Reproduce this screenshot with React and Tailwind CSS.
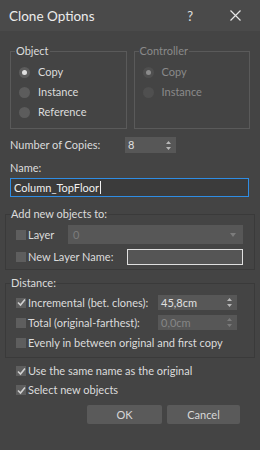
import React from 'react';

const Radio = ({ label, checked, disabled }) => (
  <div className="flex items-center h-[20px]">
    <span
      className={`w-[11px] h-[11px] rounded-full flex items-center justify-center ${
        disabled ? 'bg-[#4f4f4f]' : 'bg-[#5c5c5c]'
      }`}
    >
      {checked && (
        <span className={`w-[5px] h-[5px] rounded-full ${disabled ? 'bg-[#8c8c8c]' : 'bg-[#e0e0e0]'}`} />
      )}
    </span>
    <span className={`ml-[8px] ${disabled ? 'text-[#8a8a8a]' : 'text-[#dcdcdc]'}`}>{label}</span>
  </div>
);

const Check = ({ checked }) => (
  <span className="w-[10px] h-[10px] bg-[#5e5e5e] flex items-center justify-center shrink-0">
    {checked && (
      <svg width="9" height="9" viewBox="0 0 9 9">
        <path d="M1 4.5 L3.5 7 L8 1.5" fill="none" stroke="#d0d0d0" strokeWidth="1.6" />
      </svg>
    )}
  </span>
);

const Arrows = ({ dim }) => (
  <svg width="5" height="9" viewBox="0 0 5 9" className="shrink-0">
    <path d="M2.5 0 L5 3 L0 3 Z M0 6 L5 6 L2.5 9 Z" fill={dim ? '#7a7a7a' : '#b8b8b8'} />
  </svg>
);

const Spinner = ({ value, dim, className }) => (
  <div className={`flex items-center justify-between bg-[#575757] pl-[3px] pr-[5px] ${className}`}>
    <span className={dim ? 'text-[#868686]' : 'text-[#e0e0e0]'}>{value}</span>
    <Arrows dim={dim} />
  </div>
);

const CheckRow = ({ label, checked, className = '' }) => (
  <div className={`flex items-center whitespace-nowrap ${className}`}>
    <Check checked={checked} />
    <span className="ml-[2px] text-[#dcdcdc]">{label}</span>
  </div>
);

export default function App() {
  return (
    <div className="w-[260px] h-[450px] bg-[#444444] text-[11px] leading-[14px] text-[#dcdcdc] font-['Lato',sans-serif] overflow-hidden flex flex-col">
      {/* Title bar */}
      <div className="h-[31px] bg-[#4a4a4a] flex items-center pl-[9px] shrink-0">
        <span className="text-[13.5px] text-[#ececec]">Clone Options</span>
        <span className="ml-auto text-[13px] text-[#e0e0e0] mr-[37px]">?</span>
        <svg width="11" height="11" viewBox="0 0 11 11" className="mr-[19px]">
          <path d="M0.5 0.5 L10.5 10.5 M10.5 0.5 L0.5 10.5" stroke="#e6e6e6" strokeWidth="1.2" />
        </svg>
      </div>

      <div className="flex flex-col pt-[13px]">
        {/* Object / Controller */}
        <div className="flex gap-[7px] px-[10px]">
          <fieldset className="w-[117px] h-[85px] border border-[#5a5a5a] px-[8px]">
            <legend className="px-[1px] -ml-[4px]">Object</legend>
            <div className="pt-[4px]">
              <Radio label="Copy" checked />
              <Radio label="Instance" />
              <Radio label="Reference" />
            </div>
          </fieldset>
          <fieldset className="w-[117px] h-[85px] border border-[#5a5a5a] px-[8px]">
            <legend className="px-[1px] -ml-[4px] text-[#8a8a8a]">Controller</legend>
            <div className="pt-[4px]">
              <Radio label="Copy" checked disabled />
              <Radio label="Instance" disabled />
            </div>
          </fieldset>
        </div>

        {/* Number of copies */}
        <div className="flex items-center px-[10px] mt-[8px]">
          <span>Number of Copies:</span>
          <Spinner value="8" className="ml-auto mr-[74px] w-[51px] h-[16px]" />
        </div>

        <div className="px-[10px] mt-[8px]">Name:</div>
        <div className="mx-[10px] mt-[3px] w-[239px] h-[19px] border border-[#2f8de4] bg-[#3b3b3b] flex items-center pl-[3px]">
          <span className="text-[#f0f0f0]">Column_TopFloor</span>
          <span className="w-px h-[13px] bg-[#f0f0f0] ml-[1px]" />
        </div>

        {/* Add new objects to */}
        <fieldset className="mx-[5px] mt-[10px] w-[250px] h-[63px] border border-[#3a3a3a] px-[10px]">
          <legend className="-ml-[5px]">Add new objects to:</legend>
          <div className="flex items-center mt-[4px] h-[19px]">
            <CheckRow label="Layer" />
            <div className="ml-auto mr-[1px] w-[175px] h-[19px] bg-[#575757] flex items-center justify-between pl-[5px] pr-[7px]">
              <span className="text-[#7c7c7c]">0</span>
              <svg width="6" height="4" viewBox="0 0 6 4">
                <path d="M0 0 L6 0 L3 4 Z" fill="#7c7c7c" />
              </svg>
            </div>
          </div>
          <div className="flex items-center mt-[5px] h-[16px]">
            <CheckRow label="New Layer Name:" />
            <div className="ml-auto mr-[1px] w-[116px] h-[16px] border border-[#e0e0e0] bg-[#555555]" />
          </div>
        </fieldset>

        {/* Distance */}
        <fieldset className="mx-[5px] mt-[6px] w-[250px] h-[82px] border border-[#3a3a3a] px-[10px]">
          <legend className="-ml-[5px]">Distance:</legend>
          <div className="flex items-center mt-[5px] h-[15px]">
            <CheckRow label="Incremental (bet. clones):" checked />
            <Spinner value="45,8cm" className="ml-auto mr-[7px] w-[79px] h-[15px]" />
          </div>
          <div className="flex items-center mt-[5px] h-[15px]">
            <CheckRow label="Total (original-farthest):" />
            <Spinner value="0,0cm" dim className="ml-auto mr-[7px] w-[79px] h-[15px]" />
          </div>
          <CheckRow label="Evenly in between original and first copy" className="mt-[6px]" />
        </fieldset>

        <div className="px-[16px] mt-[6px] flex flex-col gap-[5px]">
          <CheckRow label="Use the same name as the original" checked />
          <CheckRow label="Select new objects" checked />
        </div>

        <div className="flex justify-end gap-[5px] pr-[20px] mt-[8px]">
          <button className="w-[75px] h-[19px] rounded-[2px] bg-[#5a5a5a] text-[#d8d8d8]">OK</button>
          <button className="w-[73px] h-[19px] rounded-[2px] bg-[#5a5a5a] text-[#d8d8d8]">Cancel</button>
        </div>
      </div>
    </div>
  );
}
